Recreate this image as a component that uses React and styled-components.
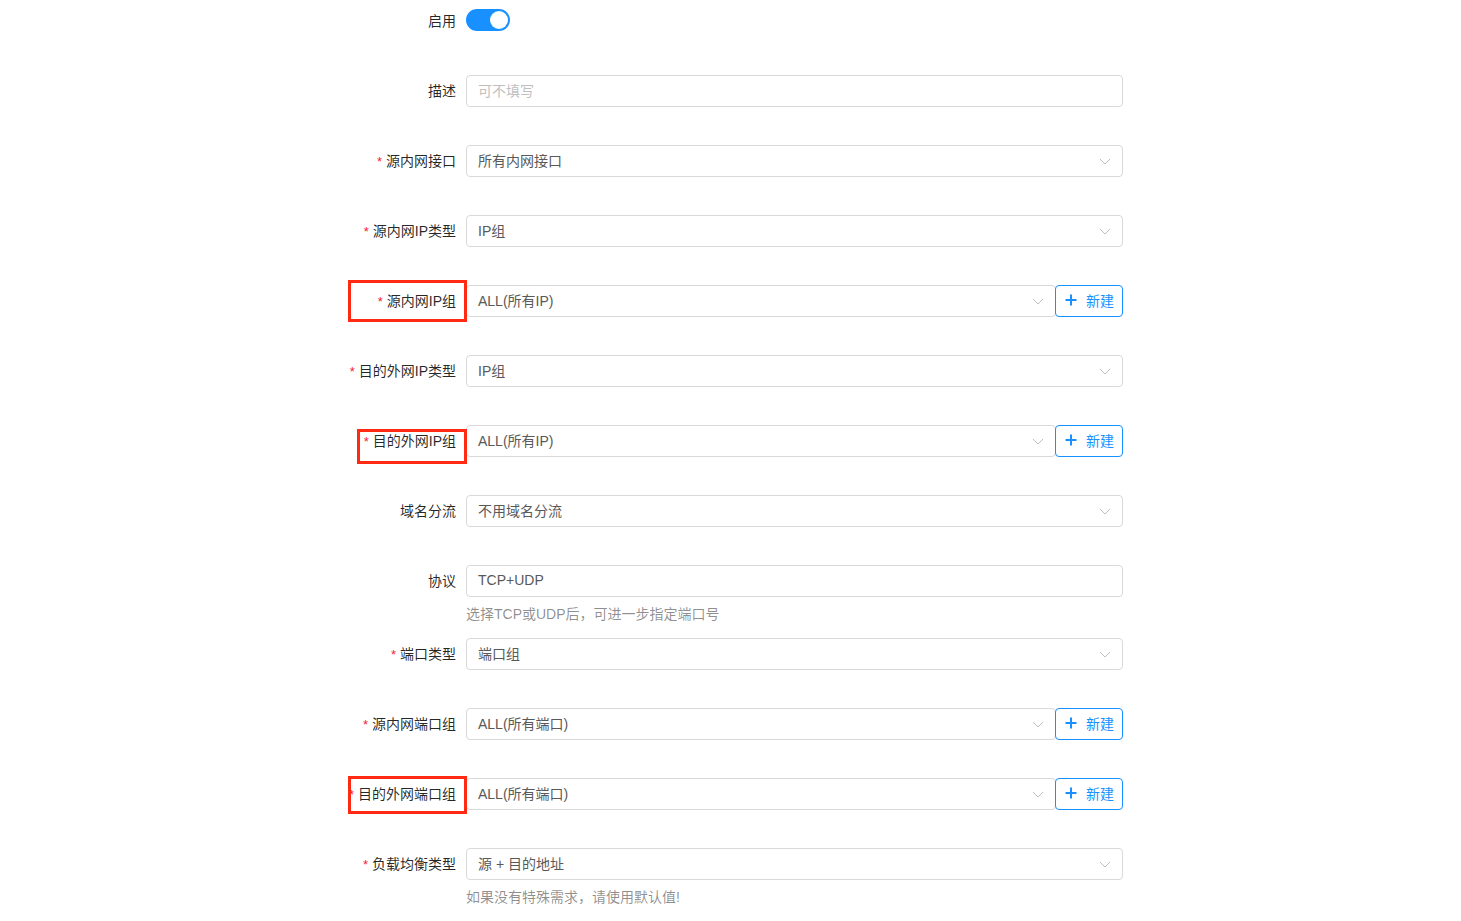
import React from "react";
import styled, { createGlobalStyle } from "styled-components";

const GlobalStyle = createGlobalStyle`
  body {
    margin: 0;
    background: #fff;
    font-family: "Liberation Sans", Arial, "Noto Sans CJK SC", sans-serif;
    font-size: 14px;
    color: rgba(0, 0, 0, 0.85);
  }
`;

const Form = styled.div`
  padding: 5px 0 0 316px;
`;

const Item = styled.div`
  display: flex;
  margin-bottom: ${(p) => (p.$hint ? "0" : "38px")};
`;

const LabelCell = styled.div`
  position: relative;
  width: 150px;
  flex: none;
  padding-right: 10px;
  box-sizing: border-box;
  text-align: right;
  line-height: 32px;
  height: 32px;
  white-space: nowrap;
  color: rgba(0, 0, 0, 0.85);
`;

const Star = styled.span`
  color: #f5222d;
  margin-right: 4px;
  font-size: 13px;
`;

const Annotation = styled.div`
  position: absolute;
  left: ${(p) => p.$left}px;
  top: ${(p) => p.$top}px;
  width: ${(p) => p.$width}px;
  height: ${(p) => p.$height}px;
  border: 3px solid #ff2a14;
  box-sizing: border-box;
  pointer-events: none;
  z-index: 2;
`;

const Control = styled.div`
  width: 657px;
  flex: none;
`;

const Row = styled.div`
  display: flex;
  align-items: center;
  height: 32px;
`;

const Box = styled.div`
  flex: 1;
  height: 32px;
  box-sizing: border-box;
  border: 1px solid #d9d9d9;
  border-radius: 4px;
  display: flex;
  align-items: center;
  padding: 0 11px 2px;
  color: ${(p) => (p.$placeholder ? "#bfbfbf" : "#595959")};
  background: #fff;
`;

const Value = styled.span`
  flex: 1;
  white-space: nowrap;
`;

const Arrow = styled.svg`
  width: 12px;
  height: 12px;
  flex: none;
  margin-top: 2px;
`;

const AddButton = styled.button`
  flex: none;
  width: 68px;
  height: 32px;
  margin-left: -1px;
  position: relative;
  border: 1px solid #1890ff;
  border-radius: 4px;
  background: #fff;
  color: #1890ff;
  font-family: inherit;
  font-size: 14px;
  display: flex;
  align-items: center;
  gap: 9px;
  padding: 0 0 2px 9px;
  cursor: pointer;
`;

const Hint = styled.div`
  padding: 6px 0 13px;
  line-height: 22px;
  color: rgba(0, 0, 0, 0.45);
  font-size: 14px;
`;

const Switch = styled.div`
  margin-top: 4px;
  width: 44px;
  height: 22px;
  border-radius: 11px;
  background: #1890ff;
  position: relative;

  &::after {
    content: "";
    position: absolute;
    top: 2px;
    right: 2px;
    width: 18px;
    height: 18px;
    border-radius: 50%;
    background: #fff;
  }
`;

function Chevron() {
  return (
    <Arrow viewBox="0 0 12 12">
      <path d="M1 4 L6 9 L11 4" fill="none" stroke="#bfbfbf" strokeWidth="1" />
    </Arrow>
  );
}

function Plus() {
  return (
    <svg width="12" height="12" viewBox="0 0 12 12">
      <path d="M6 0.5 V11.5 M0.5 6 H11.5" stroke="#1890ff" strokeWidth="2" />
    </svg>
  );
}

function Field({ label, required, mark, children, hint }) {
  return (
    <Item $hint={!!hint}>
      <LabelCell>
        {required && <Star>*</Star>}
        {label}
        {mark && <Annotation {...mark} />}
      </LabelCell>
      <Control>
        {children}
        {hint && <Hint>{hint}</Hint>}
      </Control>
    </Item>
  );
}

function Select({ value, add }) {
  return (
    <Row>
      <Box>
        <Value>{value}</Value>
        <Chevron />
      </Box>
      {add && (
        <AddButton>
          <Plus />
          新建
        </AddButton>
      )}
    </Row>
  );
}

const rows = [
  { label: "源内网接口", value: "所有内网接口" },
  { label: "源内网IP类型", value: "IP组" },
  {
    label: "源内网IP组",
    value: "ALL(所有IP)",
    add: true,
    mark: { $left: 32, $top: -5, $width: 119, $height: 42 },
  },
  { label: "目的外网IP类型", value: "IP组" },
  {
    label: "目的外网IP组",
    value: "ALL(所有IP)",
    add: true,
    mark: { $left: 41, $top: 4, $width: 110, $height: 35 },
  },
];

const rows2 = [
  { label: "端口类型", value: "端口组" },
  { label: "源内网端口组", value: "ALL(所有端口)", add: true },
  {
    label: "目的外网端口组",
    value: "ALL(所有端口)",
    add: true,
    mark: { $left: 32, $top: -2, $width: 119, $height: 38 },
  },
];

export default function App() {
  return (
    <>
      <GlobalStyle />
      <Form>
        <Field label="启用">
          <Switch />
        </Field>
        <Field label="描述">
          <Row>
            <Box $placeholder>可不填写</Box>
          </Row>
        </Field>
        {rows.map((r) => (
          <Field key={r.label} label={r.label} required mark={r.mark}>
            <Select value={r.value} add={r.add} />
          </Field>
        ))}
        <Field label="域名分流">
          <Select value="不用域名分流" />
        </Field>
        <Field label="协议" hint="选择TCP或UDP后，可进一步指定端口号">
          <Row>
            <Box>TCP+UDP</Box>
          </Row>
        </Field>
        {rows2.map((r) => (
          <Field key={r.label} label={r.label} required mark={r.mark}>
            <Select value={r.value} add={r.add} />
          </Field>
        ))}
        <Field label="负载均衡类型" required hint="如果没有特殊需求，请使用默认值!">
          <Select value="源 + 目的地址" />
        </Field>
      </Form>
    </>
  );
}
